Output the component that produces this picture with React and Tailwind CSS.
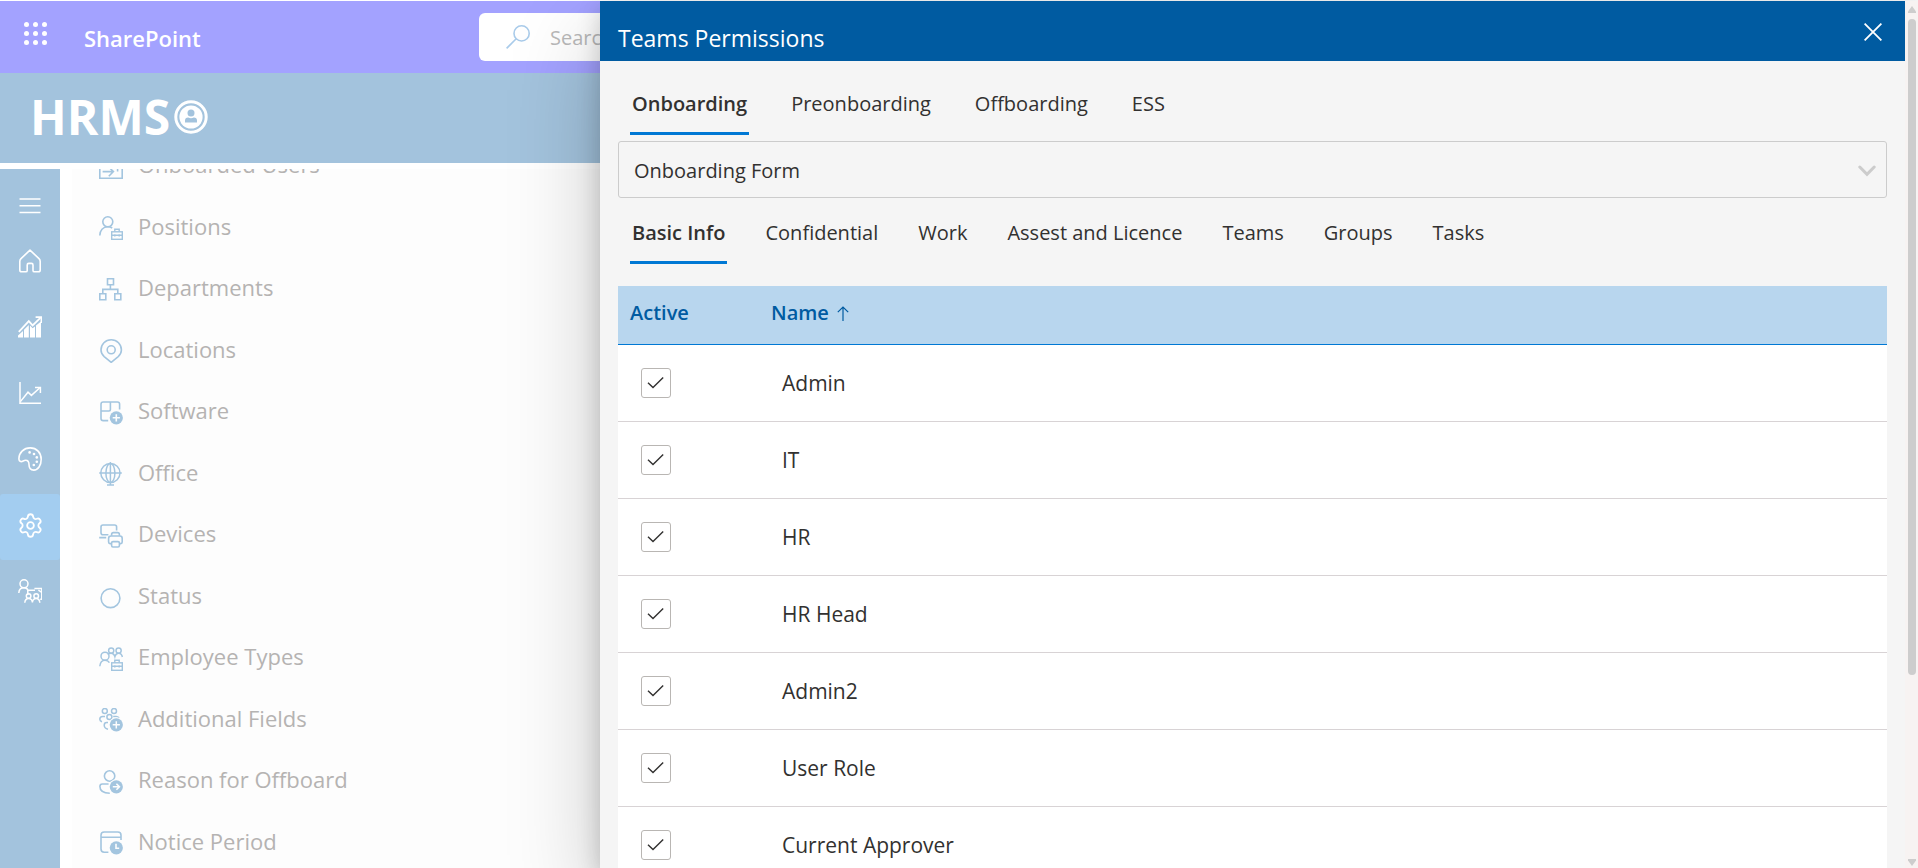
import React, { useState } from "react";
import { Settings } from "lucide-react";

function Icon({ children, size = 24, className = "" }) {
  return (
    <svg
      width={size}
      height={size}
      viewBox="0 0 24 24"
      fill="none"
      stroke="currentColor"
      strokeWidth="1.6"
      aria-hidden="true"
      className={"shrink-0 " + className}
    >
      {children}
    </svg>
  );
}

function Badge({ children }) {
  return (
    <g>
      <circle cx="17.3" cy="16.8" r="7.6" fill="#fdfdfd" stroke="none" />
      <circle cx="17.3" cy="16.8" r="6.6" fill="currentColor" stroke="none" />
      <g stroke="#fdfdfd">{children}</g>
    </g>
  );
}

function Briefcase() {
  return (
    <g strokeWidth="1.4">
      <rect x="12.7" y="15.8" width="10.6" height="7.5" fill="#fdfdfd" />
      <path d="M15.8 15.5V13.2h4.4v2.3M12.7 19.2h10.6M15.8 18.2v2.2M20.2 18.2v2.2" />
    </g>
  );
}

const railIcons = {
  menu: <path d="M1.5 5h21M1.5 11.7h21M1.5 18.4h21" strokeWidth="1.5" />,
  home: (
    <path
      strokeWidth="1.6"
      strokeLinejoin="round"
      d="M12 1.2 21 9.6Q22.2 10.8 22.2 12.4V21Q22.2 22.8 20.4 22.8H16.4Q15 22.8 15 21.4V16Q15 14.4 13.4 14.4H10.8Q9.2 14.4 9.2 16V21.4Q9.2 22.8 7.8 22.8H3.6Q1.8 22.8 1.8 21V12.4Q1.8 10.8 3 9.6Z"
    />
  ),
  bars: (
    <g>
      <path d="M0.8 16.8 10.8 6.2 14.6 10.4 22.4 2.8" strokeWidth="1.8" />
      <path d="M17.6 2.2h5.8v5.8" strokeWidth="1.7" />
      <path
        stroke="none"
        fill="currentColor"
        d="M0 22.6V20.4L5 16v6.6ZM6 22.6V14.8L10.8 10v12.6ZM12 22.6V10.6L14.6 13.2 17 11.6v11ZM18 22.6V10.6L23 6.6v16Z"
      />
    </g>
  ),
  line: (
    <g>
      <path d="M2 1v21.2h21" strokeWidth="1.5" />
      <path d="M2.4 20.6 10 11.2 13.4 14.4 21.6 7" strokeWidth="1.5" />
      <path d="M17 6.6h5.4v5.4" strokeWidth="1.5" />
    </g>
  ),
  palette: (
    <g>
      <path
        strokeWidth="1.6"
        d="M12.2 0.9C18.6.9 23.2 5.6 23.2 12.2 23.2 18.6 20 23.1 15.8 23.1 12.4 23.1 11 20.8 11 17.6 11 14.8 9.8 13.2 7.6 13.2 5.4 13.2 5 14.6 3.2 14.6 1.6 14.6.9 13.4.9 11.6.9 5.8 5.6.9 12.2.9Z"
      />
      <g fill="currentColor" stroke="none">
        <circle cx="11.6" cy="5.4" r="1.3" />
        <circle cx="16" cy="7" r="1.3" />
        <circle cx="18.8" cy="10.4" r="1.3" />
        <circle cx="18.8" cy="14.8" r="1.3" />
        <circle cx="15.8" cy="18" r="1.3" />
      </g>
    </g>
  ),
  people: (
    <g strokeWidth="1.5">
      <circle cx="6" cy="4.8" r="4" />
      <path d="M.8 14C1 10.6 3 8.8 6 8.8 8 8.8 9.4 9.8 10 11.2H17" />
      <path d="M9.8 11v5M16.4 9.4h7.4V20.2h-1.6M23.4 13.2l-3-2" />
      <circle cx="10.6" cy="17" r="2.3" />
      <circle cx="18.2" cy="17" r="2.3" />
      <path d="M6.8 23.8C7 21 8.4 19.4 10.6 19.4 12.8 19.4 14.2 21 14.4 23.4 14.6 21 16 19.4 18.2 19.4 20.4 19.4 21.6 21 21.8 23.8" />
    </g>
  ),
};

const menuIcons = {
  onboarded: (
    <g>
      <path d="M.8 3h22.4v20.2H.8Z" />
      <path d="M3.6 16.6H14M9.8 12l4.6 4.6L9.8 21.2M4.4 11v3M12 9v3h6.6v4.4" />
    </g>
  ),
  positions: (
    <g>
      <circle cx="8.8" cy="5.8" r="5" />
      <path d="M.8 19.6C.8 14.4 4 10.8 8.8 10.8 10.6 10.8 12 11.2 13.2 12" />
      <Briefcase />
    </g>
  ),
  departments: (
    <path d="M8.5.8h6v6h-6ZM.8 15.8h6v6h-6ZM15.8 15.8h6v6h-6ZM11.4 6.8v4.4M3.8 15.8v-4.4h15v4.4" />
  ),
  locations: (
    <g>
      <path
        strokeLinejoin="round"
        d="M12.2.8C18 .8 22.4 5.2 22.4 11 22.4 14 21 16 19.2 17.6L12.2 23.4 5.2 17.6C3.4 16 2 14 2 11 2 5.2 6.4.8 12.2.8Z"
      />
      <circle cx="12.2" cy="10.8" r="4" />
    </g>
  ),
  software: (
    <g>
      <path d="M9.2 19.6H4.2Q2 19.6 2 17.4V3.2Q2 1 4.2 1H18.4Q20.6 1 20.6 3.2V8.6M11.4 1V8.6Q11.4 10 10 10H2" />
      <Badge>
        <path d="M17.3 13.2v7.2M13.7 16.8h7.2" />
      </Badge>
    </g>
  ),
  office: (
    <g strokeWidth="1.5">
      <circle cx="11.4" cy="11" r="9.6" />
      <ellipse cx="11.4" cy="11" rx="4.5" ry="9.6" />
      <path d="M.2 11h22.6M11.4 0v23M8 23h7" />
    </g>
  ),
  devices: (
    <g>
      <path d="M9.4 10.8H4Q2 10.8 2 8.8V3Q2 1 4 1H15.6Q17.6 1 17.6 3V6.4M.2 13.6h7" />
      <path d="M12.6 11.8V10.6Q12.6 8.6 14.4 8.6H18.6Q20.4 8.6 20.4 10.6V11.8" />
      <path d="M12.4 19.6H11Q9.6 19.6 9.6 18V14.4Q9.6 12 12 12H21Q23.2 12 23.2 14.4V18Q23.2 19.6 21.8 19.6H20.6" />
      <rect x="12.6" y="17.6" width="7.8" height="5.4" rx="1.4" />
    </g>
  ),
  status: <circle cx="11.5" cy="13.2" r="9.4" />,
  employee: (
    <g strokeWidth="1.5">
      <circle cx="12.2" cy="3.6" r="2.6" />
      <circle cx="19.6" cy="3.6" r="2.6" />
      <path d="M8.6 7.4Q10 6.2 12.2 6.2 15 6.2 15.9 9.6 16.8 6.2 19.6 6.2 22.6 6.2 23.4 10" />
      <circle cx="6" cy="9.2" r="4" />
      <path d="M.8 19.2Q1.4 13.2 6 13.2 9 13.2 10.4 15.6" />
      <Briefcase />
    </g>
  ),
  fields: (
    <g strokeWidth="1.5">
      <circle cx="5.8" cy="3" r="2.5" />
      <circle cx="15" cy="3" r="2.5" />
      <circle cx="10.4" cy="9" r="2.5" />
      <path d="M6 8.4H3.6Q.8 8.4.8 11.2.8 13 3 13.8M14.2 8.4h3q2.4 0 3 2M9 14.6H7.8Q5.2 14.6 5.2 17.2 5.4 20.4 9 21.2" />
      <Badge>
        <path d="M17.3 13.2v7.2M13.7 16.8h7.2" />
      </Badge>
    </g>
  ),
  reason: (
    <g>
      <circle cx="10.6" cy="6" r="5.2" />
      <path d="M9.6 14H3.4Q.9 14 .9 16.6.9 23.2 10.8 23.2" />
      <Badge>
        <path d="M13.8 16.8h6.4M17.4 13.8l3 3-3 3" />
      </Badge>
    </g>
  ),
  notice: (
    <g>
      <path d="M9.4 21.2H5.2Q2 21.2 2 18V4.2Q2 1 5.2 1H18.8Q22 1 22 4.2V9M2 6.2h20" />
      <Badge>
        <path d="M17 12.8v4.4h3.2" />
      </Badge>
    </g>
  ),
};

const rail = [
  ["home", "Home"],
  ["bars", "Analytics"],
  ["line", "Reports"],
  ["palette", "Theme"],
  ["gear", "Settings"],
  ["people", "Teams"],
];

const menu = [
  ["onboarded", "Onboarded Users"],
  ["positions", "Positions"],
  ["departments", "Departments"],
  ["locations", "Locations"],
  ["software", "Software"],
  ["office", "Office"],
  ["devices", "Devices"],
  ["status", "Status"],
  ["employee", "Employee Types"],
  ["fields", "Additional Fields"],
  ["reason", "Reason for Offboard"],
  ["notice", "Notice Period"],
];

const roles = ["Admin", "IT", "HR", "HR Head", "Admin2", "User Role", "Current Approver"];

function SuiteBar() {
  return (
    <header className="flex h-[72px] items-center bg-[#a3a2ff] text-white">
      <button type="button" aria-label="App launcher" className="mb-2 ml-6 shrink-0">
        <svg width="23" height="23" viewBox="0 0 23 23" fill="currentColor" aria-hidden="true">
          {[2.5, 11.5, 20.5].map((y) =>
            [2.5, 11.5, 20.5].map((x) => <circle key={x + "-" + y} cx={x} cy={y} r="2.5" />)
          )}
        </svg>
      </button>
      <a href="#sharepoint" className="ml-[37px] w-[395px] shrink-0 pt-[2px] text-[22px] font-semibold">
        SharePoint
      </a>
      <label className="flex h-12 flex-1 items-center rounded-md bg-white text-[#a9cbea]">
        <svg width="24" height="24" viewBox="0 0 24 24" fill="none" stroke="currentColor" strokeWidth="1.6" className="mr-5 ml-[27px] shrink-0" aria-hidden="true">
          <circle cx="15.6" cy="8.4" r="7.6" />
          <path d="M10.2 13.8.6 23.4" />
        </svg>
        <input
          type="search"
          aria-label="Search"
          placeholder="Search"
          className="min-w-0 flex-1 bg-transparent pt-[2px] text-[20px] text-[#b9b9b9] outline-none placeholder:text-[#b9b9b9]"
        />
      </label>
    </header>
  );
}

function BrandBar() {
  return (
    <div className="flex h-[90px] items-center gap-1 bg-[#a3c3dd] pb-[2px] pl-[30px] text-white">
      <span className="text-[48px] leading-none font-bold">HRMS</span>
      <svg width="34" height="34" viewBox="0 0 34 34" aria-hidden="true">
        <circle cx="17" cy="17" r="15.2" fill="none" stroke="currentColor" strokeWidth="3" />
        <circle cx="17" cy="17" r="11.6" fill="currentColor" />
        <circle cx="17" cy="12.9" r="3.5" fill="#a3c3dd" />
        <path d="M11 22.6V20.6Q11 17.4 14.2 17.4 17 19 19.8 17.4 23 17.4 23 20.6V22.6Z" fill="#a3c3dd" />
      </svg>
    </div>
  );
}

function Rail() {
  return (
    <nav aria-label="Main" className="flex w-[60px] shrink-0 flex-col bg-[#a3c3dd] text-white">
      <button type="button" aria-label="Toggle menu" className="flex h-[61px] items-center justify-center pt-3">
        <Icon>{railIcons.menu}</Icon>
      </button>
      {rail.map(([key, label]) => (
        <a
          key={key}
          href={"#" + key}
          aria-label={label}
          className={
            "flex h-[66px] items-center justify-center rounded-[3px] pb-1 " +
            (key === "gear" ? "bg-[#a3cdf0]" : "")
          }
        >
          {key === "gear" ? (
            <Settings size={27} strokeWidth={1.6} aria-hidden="true" />
          ) : (
            <Icon>{railIcons[key]}</Icon>
          )}
        </a>
      ))}
    </nav>
  );
}

function SettingsMenu() {
  return (
    <div className="ml-3 flex-1 overflow-hidden bg-[#fdfdfd]">
      <ul className="-mt-[35px]">
        {menu.map(([key, label]) => (
          <li key={key} className="odd:h-[61px] even:h-[62px]">
            <a href={"#" + key} className="flex h-full items-center gap-[15px] pl-[27px] text-[22px] text-[#b5b3b2]">
              <Icon className="mt-1 text-[#a3c5df]">{menuIcons[key]}</Icon>
              {label}
            </a>
          </li>
        ))}
      </ul>
    </div>
  );
}

function Tabs({ items, label, className }) {
  const [active, setActive] = useState(items[0]);
  return (
    <div role="tablist" aria-label={label} className={"flex pl-3 " + className}>
      {items.map((item) => (
        <button
          key={item}
          type="button"
          role="tab"
          aria-selected={item === active}
          onClick={() => setActive(item)}
          className={
            "h-[60px] border-b-[3px] px-[2px] text-[20px] whitespace-nowrap " +
            (item === active ? "border-[#0078d4] font-semibold" : "border-transparent")
          }
        >
          {item}
        </button>
      ))}
    </div>
  );
}

function RoleRow({ name }) {
  const [checked, setChecked] = useState(true);
  const id = "role-" + name.toLowerCase().replace(/\s/g, "-");
  return (
    <tr className="h-[77px] bg-white">
      <td className="border-b border-[#d8d3d5] pl-[23px]">
        <span className="grid size-[30px]">
          <input
            id={id}
            type="checkbox"
            checked={checked}
            onChange={(e) => setChecked(e.target.checked)}
            className="col-start-1 row-start-1 size-[30px] appearance-none rounded-[3px] border border-[#b9b6b3] bg-white"
          />
          {checked && (
            <svg
              width="30"
              height="30"
              viewBox="0 0 30 30"
              fill="none"
              stroke="#323130"
              strokeWidth="1.4"
              className="pointer-events-none col-start-1 row-start-1"
              aria-hidden="true"
            >
              <path d="M7 14.8 12 19.6 22.2 9.6" />
            </svg>
          )}
        </span>
      </td>
      <td className="border-b border-[#d8d3d5] pt-[2px] pl-[23px] text-[21px]">
        <label htmlFor={id}>{name}</label>
      </td>
    </tr>
  );
}

function PermissionsPanel() {
  return (
    <section
      role="dialog"
      aria-label="Teams Permissions"
      className="absolute top-px right-0 bottom-0 left-[600px] flex bg-[#f5f5f5] text-[#323130] shadow-[0_38px_86px_rgba(0,0,0,0.22),0_7px_22px_rgba(0,0,0,0.18)]"
    >
      <div className="flex min-w-0 flex-1 flex-col overflow-hidden">
        <header className="flex h-[60px] shrink-0 items-center justify-between bg-[#005ba1] pt-[2px] pr-[23px] pl-[18px] text-white">
          <h1 className="pt-3 text-[23px]">Teams Permissions</h1>
          <button type="button" aria-label="Close">
            <svg width="18" height="18" viewBox="0 0 18 18" fill="none" stroke="currentColor" strokeWidth="1.8" aria-hidden="true">
              <path d="M.6.6 17.4 17.4M17.4.6.6 17.4" />
            </svg>
          </button>
        </header>

        <div className="px-[18px] pt-[14px]">
          <Tabs
            label="Area"
            className="gap-10"
            items={["Onboarding", "Preonboarding", "Offboarding", "ESS"]}
          />

          <div className="my-[6px] grid">
            <select
              aria-label="Form"
              className="col-start-1 row-start-1 h-[57px] w-full appearance-none rounded-[3px] border border-[#cccccc] bg-transparent px-[15px] pt-[2px] text-[20px]"
            >
              <option>Onboarding Form</option>
            </select>
            <svg
              width="18"
              height="12"
              viewBox="0 0 18 12"
              fill="none"
              stroke="#cccccc"
              strokeWidth="3"
              strokeLinecap="round"
              className="pointer-events-none col-start-1 row-start-1 mt-[2px] mr-[11px] self-center justify-self-end"
              aria-hidden="true"
            >
              <path d="M1.8 2 9 9.4 16.2 2" />
            </svg>
          </div>

          <Tabs
            label="Section"
            className="gap-9"
            items={["Basic Info", "Confidential", "Work", "Assest and Licence", "Teams", "Groups", "Tasks"]}
          />

          <table className="mt-[22px] w-full table-fixed border-separate border-spacing-0 text-left">
            <thead>
              <tr className="h-[59px] bg-[#b8d6ee] text-[20px] text-[#005ba1]">
                <th scope="col" className="w-[141px] border-b border-[#0078d4] pb-1 pl-3 font-semibold">
                  Active
                </th>
                <th scope="col" aria-sort="ascending" className="border-b border-[#0078d4] pb-1 pl-3 font-semibold">
                  <span className="flex items-center gap-2">
                    Name
                    <svg width="12" height="15" viewBox="0 0 12 15" fill="none" stroke="currentColor" strokeWidth="1.2" aria-hidden="true">
                      <path d="M6 15V1M.8 6.2 6 1l5.2 5.2" />
                    </svg>
                  </span>
                </th>
              </tr>
            </thead>
            <tbody>
              {roles.map((name) => (
                <RoleRow key={name} name={name} />
              ))}
            </tbody>
          </table>
        </div>
      </div>

      <div aria-hidden="true" className="flex w-[13px] shrink-0 flex-col items-center bg-[#f7f3f2] text-[#cdcdcd]">
        <svg width="8" height="7" viewBox="0 0 8 7" fill="currentColor" className="mt-[5px] mb-[6px] shrink-0">
          <path d="M4 0 8 5.6V7H0V5.6Z" />
        </svg>
        <div className="w-2 grow-[656] rounded-full bg-[#cdcdcd]" />
        <div className="grow-[184]" />
        <svg width="8" height="7" viewBox="0 0 8 7" fill="currentColor" className="mb-[2px] shrink-0">
          <path d="M4 7 8 1.4V0H0V1.4Z" />
        </svg>
      </div>
    </section>
  );
}

export default function App() {
  return (
    <div className="relative flex h-screen flex-col overflow-hidden bg-white pt-px font-['Open_Sans','Noto_Sans',sans-serif]">
      <SuiteBar />
      <BrandBar />
      <div className="mt-[6px] flex min-h-0 flex-1">
        <Rail />
        <SettingsMenu />
      </div>
      <PermissionsPanel />
    </div>
  );
}
